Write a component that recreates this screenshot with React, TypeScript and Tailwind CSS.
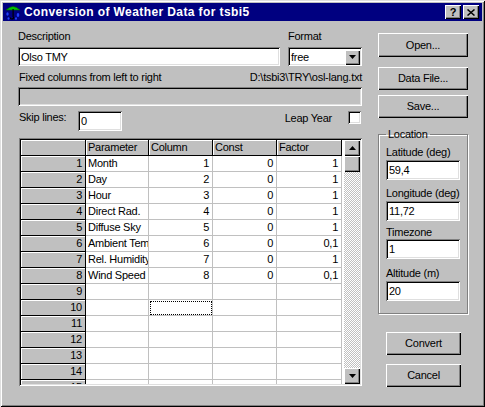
import React from 'react';

const RAISED = 'shadow-[inset_1px_1px_0_#fff,inset_-1px_-1px_0_#000,inset_-2px_-2px_0_#808080]';
const SUNKEN =
  'shadow-[inset_1px_1px_0_#808080,inset_-1px_-1px_0_#fff,inset_2px_2px_0_#000,inset_-2px_-2px_0_#dfdfdf]';

const ROWS: [string, string, string, string][] = [
  ['Month', '1', '0', '1'],
  ['Day', '2', '0', '1'],
  ['Hour', '3', '0', '1'],
  ['Direct Rad.', '4', '0', '1'],
  ['Diffuse Sky', '5', '0', '1'],
  ['Ambient Temp.', '6', '0', '0,1'],
  ['Rel. Humidity', '7', '0', '1'],
  ['Wind Speed', '8', '0', '0,1'],
];

const Button: React.FC<{ label: string; className?: string }> = ({ label, className }) => (
  <div className={`flex items-center justify-center bg-[#c0c0c0] ${RAISED} ${className ?? ''}`}>
    {label}
  </div>
);

const Field: React.FC<{ value?: string; className?: string; grey?: boolean }> = ({ value, className, grey }) => (
  <div
    className={`flex items-center pl-[3px] pt-[1px] ${grey ? 'bg-[#c0c0c0]' : 'bg-white'} ${SUNKEN} ${className ?? ''}`}
  >
    {value}
  </div>
);

const Arrow: React.FC<{ up?: boolean }> = ({ up }) => (
  <svg width="7" height="4" viewBox="0 0 7 4">
    <path d={up ? 'M3.5 0 L7 4 L0 4 Z' : 'M0 0 L7 0 L3.5 4 Z'} fill="#000" />
  </svg>
);

const WeatherIcon = () => (
  <svg width="16" height="16" viewBox="0 0 16 16">
    <path d="M1 6 Q8 -1 15 6 Z" fill="#00c000" stroke="#006000" strokeWidth="0.6" />
    <rect x="7.5" y="5" width="1.2" height="8" fill="#000" />
    <path d="M8.7 13 Q8.7 15 6.8 15 Q5.3 15 5.3 13.5" stroke="#000" strokeWidth="1.2" fill="none" />
    <ellipse cx="2.5" cy="10" rx="1.2" ry="1.8" fill="#2040ff" />
    <ellipse cx="13" cy="11" rx="1.3" ry="2" fill="#2040ff" />
    <ellipse cx="11" cy="14.5" rx="1" ry="1.3" fill="#2040ff" />
    <ellipse cx="3.5" cy="14.5" rx="1" ry="1.3" fill="#2040ff" />
  </svg>
);

const FIXED = 'bg-[#c0c0c0] border-r border-b border-black shadow-[inset_1px_1px_0_#fff]';
const CELL = 'border-r border-b border-[#c0c0c0] bg-white';

const DataGrid: React.FC = () => {
  const rows = Array.from({ length: 15 }, (_, i) => ROWS[i] ?? ['', '', '', '']);
  return (
    <div className={`ml-[1px] mt-[7px] flex h-[248px] w-[343px] bg-white p-[2px] ${SUNKEN}`}>
      <div className="h-[244px] w-[323px] overflow-hidden leading-[15px]">
        <div className="grid grid-cols-[65px_63px_64px_64px_65px] grid-rows-[repeat(16,16px)]">
          <div className={FIXED} />
          {['Parameter', 'Column', 'Const', 'Factor'].map((h) => (
            <div key={h} className={`${FIXED} pl-[2px]`}>
              {h}
            </div>
          ))}
          {rows.map((r, i) => (
            <React.Fragment key={i}>
              <div className={`${FIXED} pr-[3px] text-right`}>{i + 1}</div>
              <div className={`${CELL} overflow-hidden whitespace-nowrap pl-[2px]`}>{r[0]}</div>
              <div
                className={`${CELL} pr-[3px] text-right ${
                  i === 9 ? 'outline-1 outline-dotted outline-black outline-offset-[-2px]' : ''
                }`}
              >
                {r[1]}
              </div>
              <div className={`${CELL} pr-[3px] text-right`}>{r[2]}</div>
              <div className={`${CELL} pr-[3px] text-right`}>{r[3]}</div>
            </React.Fragment>
          ))}
        </div>
      </div>
      <div className="ml-auto flex h-[244px] w-[16px] flex-col">
        <div className={`flex h-[16px] items-center justify-center bg-[#c0c0c0] ${RAISED}`}>
          <Arrow up />
        </div>
        <div className={`h-[16px] bg-[#c0c0c0] ${RAISED}`} />
        <div className="flex-1 bg-[image:repeating-conic-gradient(#c0c0c0_0_25%,#fff_0_50%)] bg-[length:2px_2px]" />
        <div className={`flex h-[16px] items-center justify-center bg-[#c0c0c0] ${RAISED}`}>
          <Arrow />
        </div>
      </div>
    </div>
  );
};

export default function App() {
  return (
    <div
      className="flex h-[407px] w-[485px] flex-col bg-[#c0c0c0] p-[3px] font-['Liberation_Sans',Arial,sans-serif] text-[11px] leading-[13px] tracking-[-0.25px] text-black shadow-[inset_1px_1px_0_#dfdfdf,inset_-1px_-1px_0_#000,inset_2px_2px_0_#fff,inset_-2px_-2px_0_#808080]"
    >
      {/* title bar */}
      <div className="flex h-[18px] items-center bg-[#000080] pl-[2px] pr-[3px]">
        <WeatherIcon />
        <span className="ml-[3px] text-[12px] font-bold tracking-[0.4px] text-white">
          Conversion of Weather Data for tsbi5
        </span>
        <div className="ml-auto flex gap-[2px]">
          <div className={`flex h-[14px] w-[16px] items-center justify-center bg-[#c0c0c0] text-[11px] font-bold leading-none ${RAISED}`}>
            ?
          </div>
          <div className={`flex h-[14px] w-[16px] items-center justify-center bg-[#c0c0c0] ${RAISED}`}>
            <svg width="8" height="7" viewBox="0 0 8 7">
              <path d="M0.5 0.5 L7.5 6.5 M7.5 0.5 L0.5 6.5" stroke="#000" strokeWidth="1.5" />
            </svg>
          </div>
        </div>
      </div>

      <div className="flex pl-[15px]">
        {/* left column */}
        <div className="flex w-[344px] flex-col">
          <div className="mt-[9px] flex">
            <div className="flex w-[262px] flex-col">
              <span>Description</span>
              <Field value="Olso TMY" className="mt-[4px] h-[19px] w-[262px]" />
            </div>
            <div className="ml-[8px] flex flex-col">
              <span>Format</span>
              <div className={`mt-[4px] flex h-[19px] w-[74px] items-center bg-white pl-[3px] pr-[2px] pt-[1px] ${SUNKEN}`}>
                <span className="flex-1">free</span>
                <div className={`flex h-[15px] w-[15px] items-center justify-center bg-[#c0c0c0] ${RAISED}`}>
                  <Arrow />
                </div>
              </div>
            </div>
          </div>

          <div className="mt-[5px] flex justify-between pl-[1px]">
            <span>Fixed columns from left to right</span>
            <span>D:\tsbi3\TRY\osl-lang.txt</span>
          </div>
          <Field grey className="mt-[3px] h-[19px] w-[344px]" />

          <div className="mt-[5px] flex items-start">
            <span className="w-[60px] pl-[1px]">Skip lines:</span>
            <Field value="0" className="h-[20px] w-[44px]" />
            <span className="ml-auto mt-[1px]">Leap Year</span>
            <div className={`ml-[16px] mr-[1px] h-[13px] w-[13px] bg-white ${SUNKEN}`} />
          </div>

          <DataGrid />
        </div>

        {/* right column */}
        <div className="ml-[16px] flex w-[90px] flex-col">
          <Button label="Open..." className="mt-[12px] h-[24px]" />
          <Button label="Data File..." className="mt-[10px] h-[23px]" />
          <Button label="Save..." className="mt-[5px] h-[23px]" />

          <fieldset className="mt-[10px] border border-[#808080] pb-[12px] pl-[7px] shadow-[1px_1px_0_#fff,inset_1px_1px_0_#fff]">
            <legend className="px-[2px]">Location</legend>
            <span className="mt-[5px] block">Latitude (deg)</span>
            <Field value="59,4" className="mt-[1px] h-[20px] w-[74px]" />
            <span className="mt-[7px] block">Longitude (deg)</span>
            <Field value="11,72" className="mt-[1px] h-[20px] w-[74px]" />
            <span className="mt-[5px] block">Timezone</span>
            <Field value="1" className="h-[20px] w-[74px]" />
            <span className="mt-[8px] block">Altitude (m)</span>
            <Field value="20" className="mt-[1px] h-[20px] w-[74px]" />
          </fieldset>

          <Button label="Convert" className="ml-[8px] mt-[18px] h-[23px] w-[75px]" />
          <Button label="Cancel" className="ml-[8px] mt-[9px] h-[23px] w-[75px]" />
        </div>
      </div>
    </div>
  );
}
